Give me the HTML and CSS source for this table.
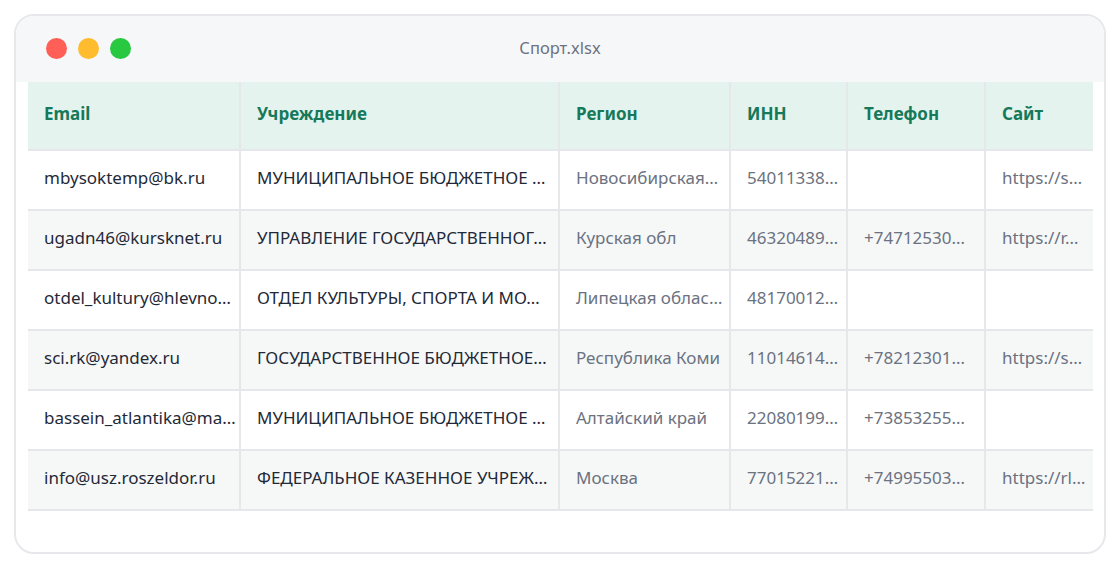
FILE: index.html
```
<!DOCTYPE html>
<html lang="ru">
<head>
  <meta charset="UTF-8">
  <meta name="viewport" content="width=device-width, initial-scale=1.0">
  <title>Спорт.xlsx</title>
  <link rel="stylesheet" href="styles.css">
</head>
<body>
  <div class="window">
    <div class="titlebar">
      <div class="dots">
        <span class="dot red"></span>
        <span class="dot yellow"></span>
        <span class="dot green"></span>
      </div>
      <div class="title">Спорт.xlsx</div>
    </div>

    <div class="sheet">
      <table>
        <colgroup>
          <col class="c-email">
          <col class="c-org">
          <col class="c-region">
          <col class="c-inn">
          <col class="c-phone">
          <col class="c-site">
        </colgroup>
        <thead>
          <tr>
            <th>Email</th>
            <th>Учреждение</th>
            <th>Регион</th>
            <th>ИНН</th>
            <th>Телефон</th>
            <th>Сайт</th>
          </tr>
        </thead>
        <tbody>
          <tr>
            <td class="main">mbysoktemp@bk.ru</td>
            <td class="main">МУНИЦИПАЛЬНОЕ БЮДЖЕТНОЕ …</td>
            <td>Новосибирская…</td>
            <td>54011338…</td>
            <td></td>
            <td>https://s…</td>
          </tr>
          <tr>
            <td class="main">ugadn46@kursknet.ru</td>
            <td class="main">УПРАВЛЕНИЕ ГОСУДАРСТВЕННОГ…</td>
            <td>Курская обл</td>
            <td>46320489…</td>
            <td>+74712530…</td>
            <td>https://r…</td>
          </tr>
          <tr>
            <td class="main">otdel_kultury@hlevno…</td>
            <td class="main">ОТДЕЛ КУЛЬТУРЫ, СПОРТА И МО…</td>
            <td>Липецкая облас…</td>
            <td>48170012…</td>
            <td></td>
            <td></td>
          </tr>
          <tr>
            <td class="main">sci.rk@yandex.ru</td>
            <td class="main">ГОСУДАРСТВЕННОЕ БЮДЖЕТНОЕ…</td>
            <td>Республика Коми</td>
            <td>11014614…</td>
            <td>+78212301…</td>
            <td>https://s…</td>
          </tr>
          <tr>
            <td class="main">bassein_atlantika@ma…</td>
            <td class="main">МУНИЦИПАЛЬНОЕ БЮДЖЕТНОЕ …</td>
            <td>Алтайский край</td>
            <td>22080199…</td>
            <td>+73853255…</td>
            <td></td>
          </tr>
          <tr>
            <td class="main">info@usz.roszeldor.ru</td>
            <td class="main">ФЕДЕРАЛЬНОЕ КАЗЕННОЕ УЧРЕЖ…</td>
            <td>Москва</td>
            <td>77015221…</td>
            <td>+74995503…</td>
            <td>https://rl…</td>
          </tr>
        </tbody>
      </table>
    </div>
  </div>
</body>
</html>
```

FILE: styles.css
```
body {
  margin: 0;
  padding: 14px;
  background: #ffffff;
  font-family: "Noto Sans", "Open Sans", sans-serif;
}
.window {
  height: 536px;
  border: 2px solid #e6e8ec;
  border-radius: 20px;
  overflow: hidden;
  background: #ffffff;
}
.titlebar {
  position: relative;
  height: 63px;
  padding-bottom: 3px;
  background: #f6f7f9;
  display: flex;
  align-items: center;
  justify-content: center;
}
.dots {
  position: absolute;
  left: 30px;
  top: 22px;
  display: flex;
  gap: 11px;
}
.dot {
  width: 21px;
  height: 21px;
  border-radius: 50%;
}
.red { background: #ff5f57; }
.yellow { background: #febc2e; }
.green { background: #28c840; }
.title {
  color: #6b7280;
  font-size: 16.5px;
}
.sheet {
  margin: 0 11px 0 12px;
  overflow: hidden;
}
table {
  border-collapse: collapse;
  table-layout: fixed;
  width: 1100px;
  font-size: 17px;
}
.c-email { width: 212px; }
.c-org { width: 319px; }
.c-region { width: 171px; }
.c-inn { width: 117px; }
.c-phone { width: 138px; }
.c-site { width: 143px; }
th, td {
  padding: 0 1px 0 16px;
  text-align: left;
  white-space: nowrap;
  overflow: hidden;
  text-overflow: ellipsis;
  border-left: 2px solid #e5e7eb;
  border-bottom: 2px solid #e5e7eb;
}
th:first-child, td:first-child {
  border-left: none;
}
th {
  height: 63px;
  padding-bottom: 4px;
  background: #e4f3ed;
  color: #15795a;
  font-weight: 700;
}
td {
  height: 53px;
  padding-bottom: 5px;
  color: #6b7280;
}
td.main {
  color: #1f2937;
}
tbody tr:nth-child(even) td {
  background: #f6f8f8;
}
```
